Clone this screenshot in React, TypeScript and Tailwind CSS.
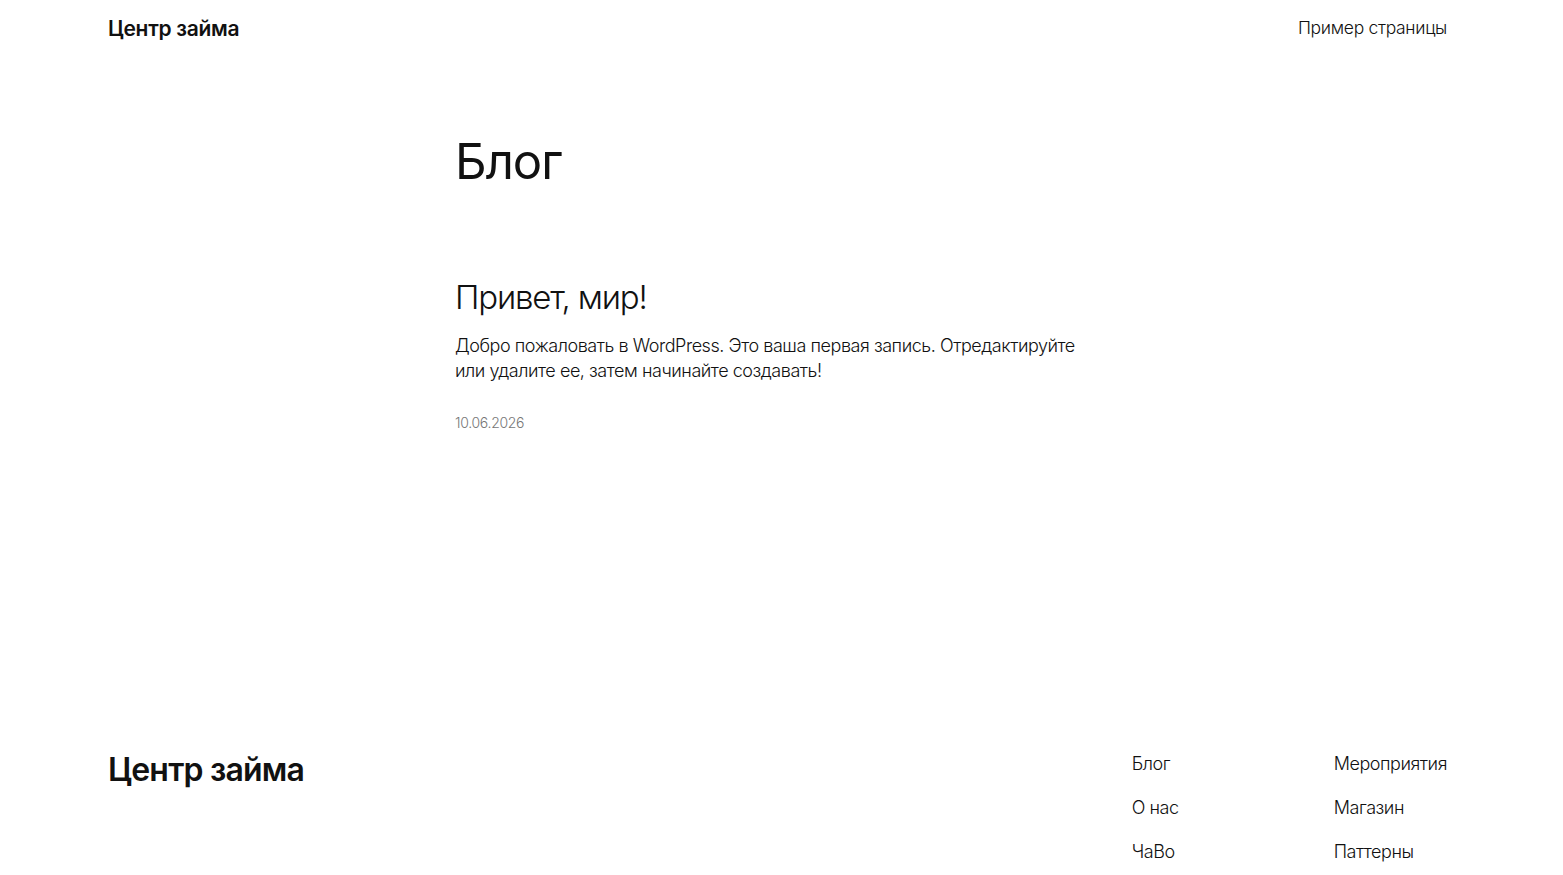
import React from 'react';

const font = { fontFamily: 'Inter, "Noto Sans", sans-serif' };

const footerLinks = [
  ['Блог', 'О нас', 'ЧаВо'],
  ['Мероприятия', 'Магазин', 'Паттерны'],
];

const App: React.FC = () => {
  return (
    <div className="min-h-[875px] bg-white text-[#111111] flex flex-col" style={font}>
      <header className="flex items-center justify-between pl-[108px] pr-[116px] h-[57px]">
        <a className="text-[21px] font-semibold tracking-[-0.3px]">Центр займа</a>
        <nav className="text-[17.5px] tracking-[-0.3px] font-light">Пример страницы</nav>
      </header>

      <main className="flex-1 pl-[455px]">
        <h1 className="text-[49px] font-normal tracking-[-1px] leading-none mt-[80px]">Блог</h1>

        <article className="mt-[91px] w-[640px]">
          <h2 className="text-[33px] font-light tracking-[-1.2px] leading-tight">Привет, мир!</h2>
          <p className="mt-[15px] text-[18px] font-light leading-[25px] tracking-[-0.45px]">
            Добро пожаловать в WordPress. Это ваша первая запись. Отредактируйте или удалите ее, затем начинайте создавать!
          </p>
          <p className="mt-[29px] text-[14px] font-light text-[#777777] tracking-[-0.3px]">10.06.2026</p>
        </article>
      </main>

      <footer className="flex justify-between pl-[108px] pr-[116px] pt-[18px] h-[142px]">
        <div className="text-[32px] font-semibold tracking-[-0.8px] leading-none mt-[3px]">Центр займа</div>
        <div className="flex gap-[60px]">
          {footerLinks.map((col, i) => (
            <ul key={i} className={i === 0 ? 'w-[142px]' : ''}>
              {col.map((l) => (
                <li key={l} className="text-[18px] font-light tracking-[-0.45px] h-[44px] leading-[25px]">
                  {l}
                </li>
              ))}
            </ul>
          ))}
        </div>
      </footer>
    </div>
  );
};

export default App;
